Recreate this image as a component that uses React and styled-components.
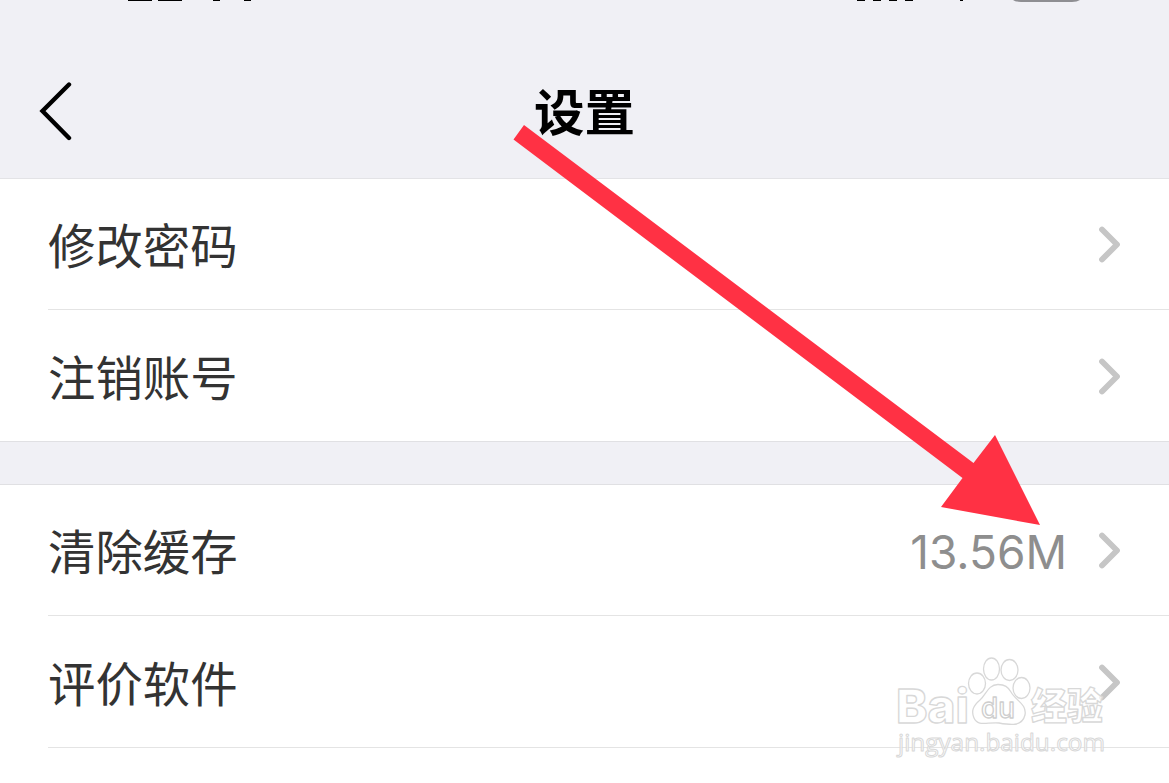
import styled, { createGlobalStyle } from "styled-components";

const GlobalStyle = createGlobalStyle`
  * {
    box-sizing: border-box;
  }
  body {
    margin: 0;
    overflow: hidden;
    background-color: #fff;
    font-family: Inter, "Noto Sans CJK SC", sans-serif;
  }
`;

const Screen = styled.main`
  position: relative;
  width: 1169px;
  height: 783px;
  overflow: hidden;
  background-color: #fff;
`;

const StatusBar = styled.div`
  height: 44px;
  background-color: #f0f0f5;
  svg {
    display: block;
  }
`;

const Header = styled.header`
  display: grid;
  grid-template-columns: 72px 1fr 72px;
  align-items: center;
  height: 135px;
  background-color: #f0f0f5;
  border-bottom: 1px solid #e3e3e6;
`;

const BackButton = styled.button`
  display: flex;
  justify-content: flex-end;
  padding: 0;
  border: none;
  background: none;
`;

const Title = styled.h1`
  margin: 0;
  padding-top: 4px;
  font-size: 50.5px;
  font-weight: 700;
  line-height: 76px;
  text-align: center;
  color: #000;
`;

const Group = styled.section`
  background-color: #fff;
`;

const Gap = styled.div`
  height: 44px;
  background-color: #f0f0f5;
  border-top: 1px solid #e0e0e3;
  border-bottom: 1px solid #e0e0e3;
`;

const Row = styled.div`
  display: flex;
  align-items: center;
  height: ${({ $last }) => ($last ? "132px" : "131px")};
  margin-left: 48px;
  padding-right: 48px;
  border-bottom: ${({ $divided }) => ($divided ? "1px solid #e4e4e4" : "none")};
`;

const Label = styled.span`
  flex: 1;
  padding-top: 6px;
  font-size: 47.4px;
  line-height: 70px;
  color: #333;
`;

const Value = styled.span`
  margin-right: 30px;
  padding-top: 4px;
  font-size: 46px;
  line-height: 70px;
  color: #8e8e8e;
`;

const Arrow = styled.svg`
  position: absolute;
  top: 0;
  left: 0;
  pointer-events: none;
`;

const Watermark = styled.svg`
  position: absolute;
  left: 889px;
  top: 648px;
  pointer-events: none;
`;

function Chevron() {
  return (
    <svg width="24" height="38" viewBox="0 0 24 38" fill="none">
      <path
        d="M5 4.500 L20 19.500 L5 34.500"
        stroke="#c6c6c6"
        strokeWidth="5.8"
        strokeLinecap="round"
        strokeLinejoin="round"
      />
    </svg>
  );
}

function Item({ label, value, divided, last }) {
  return (
    <Row $divided={divided} $last={last}>
      <Label>{label}</Label>
      {value && <Value>{value}</Value>}
      <Chevron />
    </Row>
  );
}

// Only the lower edge of the clock, signal and battery is on screen
function StatusEdge() {
  return (
    <svg width="1169" height="4" viewBox="0 0 1169 4">
      <path
        d="M128 0H152V1H128z M158 0H182V1H158z M213 0H220V1H213z M244 0H251V1H244z"
        fill="#000"
      />
      <path
        d="M857 0H865V1H857z M873 0H881V1H873z M889 0H897V1H889z M905 0H913V1H905z M960 0H963V1H960z"
        fill="#000"
      />
      <path d="M1013 0H1080Q1077 2 1072 2H1021Q1016 2 1013 0z" fill="#8e8e92" />
    </svg>
  );
}

function App() {
  return (
    <>
      <GlobalStyle />
      <Screen>
        <StatusBar>
          <StatusEdge />
        </StatusBar>
        <Header>
          <BackButton aria-label="返回">
            <svg width="34" height="60" viewBox="0 0 34 60" fill="none">
              <path
                d="M31 3.5 L4.500 30 L31 57"
                stroke="#000"
                strokeWidth="4.4"
                strokeLinecap="round"
              />
            </svg>
          </BackButton>
          <Title>设置</Title>
        </Header>
        <Group>
          <Item label="修改密码" divided />
          <Item label="注销账号" />
        </Group>
        <Gap />
        <Group>
          <Item label="清除缓存" value="13.56M" divided />
          <Item label="评价软件" divided last />
        </Group>

        <Arrow width="1169" height="783" viewBox="0 0 1169 783">
          <path
            d="M524 125 L973.5 463 L995 435 L1040 525 L941 507 L962.5 478 L513.500 139.500z"
            fill="#ff3144"
          />
        </Arrow>

        <Watermark
          width="230"
          height="115"
          viewBox="0 0 230 115"
          fill="#fff"
          stroke="#d8d8d8"
          strokeWidth="1.3"
          strokeLinejoin="round"
          fontFamily="Inter, 'Noto Sans CJK SC', sans-serif"
        >
          <g fillOpacity="0.75">
            <text x="7" y="75" fontSize="47" fontWeight="800" textLength="73" lengthAdjust="spacingAndGlyphs">
              Bai
            </text>
            <ellipse cx="88" cy="35.500" rx="8.500" ry="10.500" />
            <ellipse cx="102.500" cy="21" rx="8" ry="11" />
            <ellipse cx="120.500" cy="22" rx="8.500" ry="10.500" />
            <ellipse cx="132.500" cy="40" rx="8.500" ry="10.500" />
            <path d="M109 36.500 C99 36.500 97 47 91 52 C84 58 82 63 85 70 C89 79 98 74 110 75 C121 77 133 79 136 67 C138 56 127 53 122 44 C119 39 116 36.500 109 36.500z" />
            <text x="92" y="70" fontSize="28" fontWeight="500" textLength="34" lengthAdjust="spacingAndGlyphs" stroke="#cecece">
              du
            </text>
            <text x="142" y="72" fontSize="37" fontWeight="900" textLength="72" lengthAdjust="spacingAndGlyphs">
              经验
            </text>
            <text
              x="9"
              y="103"
              fontSize="24"
              fontWeight="500"
              fontFamily="'Open Sans', sans-serif"
              textLength="207"
              lengthAdjust="spacingAndGlyphs"
              strokeWidth="1"
            >
              jingyan.baidu.com
            </text>
          </g>
        </Watermark>
      </Screen>
    </>
  );
}

export default App;
